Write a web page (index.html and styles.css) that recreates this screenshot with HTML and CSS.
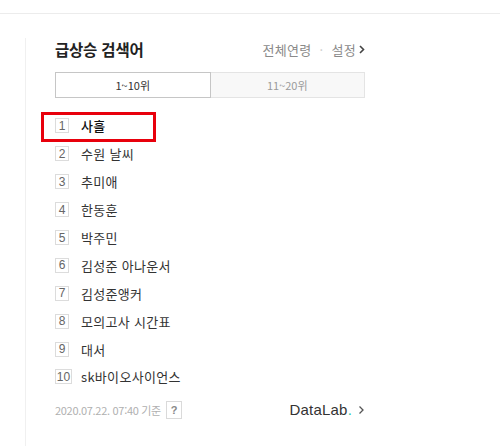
FILE: index.html
```html
<!DOCTYPE html>
<html lang="ko">
<head>
<meta charset="utf-8">
<link rel="stylesheet" href="styles.css">
</head>
<body>
<div class="top"></div>
<div class="panel">
  <div class="head">
    <h2 class="title">급상승 검색어</h2>
    <div class="opts"><span>전체연령</span><span class="dot">·</span><span>설정</span><svg class="chev" width="6" height="9" viewBox="0 0 6 9"><path d="M1 1l3.5 3.5L1 8" fill="none" stroke="#444" stroke-width="1.6"/></svg></div>
  </div>
  <div class="tabs">
    <div class="tab on">1~10위</div>
    <div class="tab">11~20위</div>
  </div>
  <ol class="list">
    <li class="row first"><span class="num">1</span><span class="kw">사흘</span><span class="mark"></span></li>
    <li class="row"><span class="num">2</span><span class="kw">수원 날씨</span></li>
    <li class="row"><span class="num">3</span><span class="kw">추미애</span></li>
    <li class="row"><span class="num">4</span><span class="kw">한동훈</span></li>
    <li class="row"><span class="num">5</span><span class="kw">박주민</span></li>
    <li class="row"><span class="num">6</span><span class="kw">김성준 아나운서</span></li>
    <li class="row"><span class="num">7</span><span class="kw">김성준앵커</span></li>
    <li class="row"><span class="num">8</span><span class="kw">모의고사 시간표</span></li>
    <li class="row"><span class="num">9</span><span class="kw">대서</span></li>
    <li class="row"><span class="num wide">10</span><span class="kw">sk바이오사이언스</span></li>
  </ol>
  <div class="foot">
    <div class="date"><span>2020.07.22. 07:40 기준</span><span class="help">?</span></div>
    <div class="lab">DataLab<span class="ldot">.</span><svg class="chev2" width="7" height="10" viewBox="0 0 7 10"><path d="M1.5 1.5l3.5 3.5-3.5 3.5" fill="none" stroke="#555" stroke-width="1.3"/></svg></div>
  </div>
</div>
</body>
</html>
```
FILE: styles.css
```css
* { box-sizing: border-box; }
html, body { margin: 0; padding: 0; background: #fff; }
body {
  width: 500px; height: 446px; overflow: hidden;
  font-family: "Noto Sans CJK KR", "Noto Sans", sans-serif;
  color: #333;
}
.top { height: 14px; border-bottom: 1px solid #ececec; }
.panel {
  margin-left: 25px;
  border-left: 1px solid #f0f0f0;
  padding-left: 29px;
  width: 340px;
  height: 420px;
  position: relative;
}
.head {
  display: flex; justify-content: space-between; align-items: center;
  height: 22px; margin-top: 24px;
}
.title { margin: 0; font-size: 15.5px; font-weight: 700; color: #222; line-height: 22px; letter-spacing: -0.2px; }
.opts { display: flex; align-items: center; font-size: 13px; color: #8a8a8a; letter-spacing: 0.3px; }
.opts .dot { color: #ccc; margin: 0 8px; }
.chev { margin-left: 3px; }
.tabs { display: flex; margin-top: 12px; height: 26px; width: 310px; }
.tab {
  flex: 1; display: flex; align-items: center; justify-content: center;
  font-size: 11px; color: #9a9a9a; background: #f8f8f8;
  border: 1px solid #e4e4e4; border-left: 0;
}
.tab.on { background: #fff; color: #333; border: 1px solid #c6c6c6; }
.list { list-style: none; margin: 14px 0 0; padding: 0; }
.row { height: 27.9px; display: flex; align-items: center; position: relative; }
.num {
  width: 14px; height: 15px; border: 1px solid #dcdcdc;
  font-family: "Liberation Sans", sans-serif; font-size: 12px; color: #666;
  display: flex; align-items: center; justify-content: center; line-height: 1;
}
.num.wide { width: 17px; }
.kw { margin-left: 12px; font-size: 13px; color: #333; letter-spacing: 0.3px; }
.num.wide + .kw { margin-left: 9px; }
.first .kw { color: #111; font-weight: 500; }
.mark {
  position: absolute; left: -14px; top: 0; width: 115px; height: 30px;
  border: 3px solid #e8000c;
}
.foot { display: flex; justify-content: space-between; align-items: center; margin-top: 9px; height: 20px; }
.date { display: flex; align-items: center; font-size: 11px; color: #b0b0b0; letter-spacing: -0.3px; }
.help {
  margin-left: 5px; width: 16px; height: 18px; border: 1px solid #dadada;
  display: flex; align-items: center; justify-content: center;
  font-family: "Liberation Sans", sans-serif; font-weight: 700; font-size: 11px; color: #888;
}
.lab { display: flex; align-items: center; font-family: "Liberation Sans", sans-serif; font-size: 15px; color: #333; letter-spacing: 0.2px; }
.ldot { color: #2bc6a4; }
.chev2 { margin-left: 6px; }
```
